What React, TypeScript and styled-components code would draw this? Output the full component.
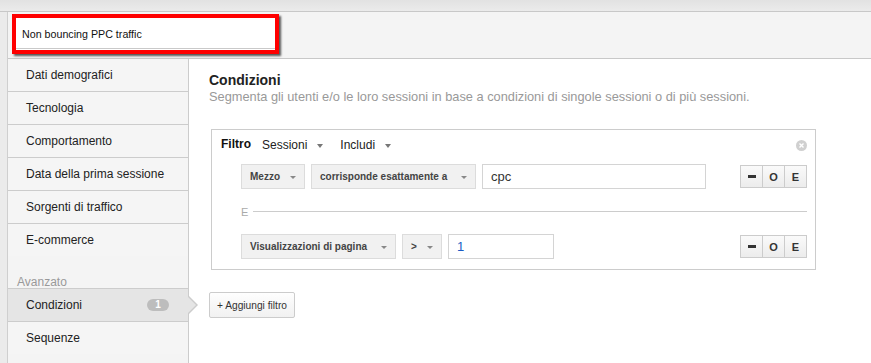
import styled, { createGlobalStyle } from 'styled-components';

const GlobalStyle = createGlobalStyle`
  html, body {
    margin: 0;
    padding: 0;
  }
  body {
    background: #ebebeb;
    font-family: "Liberation Sans", Arial, sans-serif;
    color: #222;
    width: 871px;
    height: 363px;
    overflow: hidden;
  }
`;

const navItems = [
  'Dati demografici',
  'Tecnologia',
  'Comportamento',
  'Data della prima sessione',
  'Sorgenti di traffico',
];

const App = () => {
  return (
    <>
      <GlobalStyle />
      <TopBand />
      <Shell>
        <Header>
          <NameFrame>
            <NameInput>Non bouncing PPC traffic</NameInput>
          </NameFrame>
        </Header>
        <Body>
          <Sidebar>
            {navItems.map((label) => (
              <NavItem key={label}>{label}</NavItem>
            ))}
            <NavItem $last>E-commerce</NavItem>
            <SectionLabel>Avanzato</SectionLabel>
            <NavItem $active $first>
              Condizioni
              <Badge>1</Badge>
            </NavItem>
            <NavItem $last>Sequenze</NavItem>
          </Sidebar>

          <Main>
            <Heading>Condizioni</Heading>
            <Subtitle>
              Segmenta gli utenti e/o le loro sessioni in base a condizioni di
              singole sessioni o di più sessioni.
            </Subtitle>

            <FilterBox>
              <FilterHeader>
                <FilterTitle>Filtro</FilterTitle>
                <HeaderMenu $gap={17}>
                  Sessioni <Caret />
                </HeaderMenu>
                <HeaderMenu>
                  Includi <Caret />
                </HeaderMenu>
                <CloseIcon>
                  <svg width='11' height='11' viewBox='0 0 11 11'>
                    <circle cx='5.5' cy='5.5' r='5.5' fill='#d0d0d0' />
                    <path
                      d='M3.5 3.5 L7.5 7.5 M7.5 3.5 L3.5 7.5'
                      stroke='#fff'
                      strokeWidth='1.4'
                    />
                  </svg>
                </CloseIcon>
              </FilterHeader>

              <Conditions>
                <ConditionRow>
                  <Select $width={64}>
                    Mezzo <SmallCaret />
                  </Select>
                  <Select $width={165}>
                    corrisponde esattamente a <SmallCaret />
                  </Select>
                  <ValueInput $width={224}>cpc</ValueInput>
                  <LogicGroup>
                    <LogicButton>
                      <MinusBar />
                    </LogicButton>
                    <LogicButton>O</LogicButton>
                    <LogicButton>E</LogicButton>
                  </LogicGroup>
                </ConditionRow>

                <Separator>
                  <SeparatorLabel>E</SeparatorLabel>
                  <SeparatorLine />
                </Separator>

                <ConditionRow>
                  <Select $width={155}>
                    Visualizzazioni di pagina <SmallCaret />
                  </Select>
                  <Select $width={40}>
                    &gt; <SmallCaret />
                  </Select>
                  <ValueInput $width={106} $blue>
                    1
                  </ValueInput>
                  <LogicGroup>
                    <LogicButton>
                      <MinusBar />
                    </LogicButton>
                    <LogicButton>O</LogicButton>
                    <LogicButton>E</LogicButton>
                  </LogicGroup>
                </ConditionRow>
              </Conditions>
            </FilterBox>

            <AddButton>+ Aggiungi filtro</AddButton>
          </Main>
        </Body>
      </Shell>
    </>
  );
};

const TopBand = styled.div`
  height: 11px;
  background: linear-gradient(#e2e2e2, #ebebeb);
  border-bottom: 1px solid #c8c8c8;
`;

const Shell = styled.div`
  margin-left: 7px;
  border-left: 1px solid #cfcfcf;
  background: #fff;
  height: 351px;
`;

const Header = styled.div`
  height: 47px;
  box-sizing: border-box;
  padding: 2px 0 0 4px;
  background: #f4f4f4;
  border-bottom: 1px solid #c8c8c8;
`;

const NameFrame = styled.div`
  width: 267px;
  height: 40px;
  box-sizing: border-box;
  border: 4px solid #f00;
  box-shadow: 2px 2px 2px rgba(0, 0, 0, 0.65);
  background: #fff;
`;

const NameInput = styled.div`
  height: 31px;
  box-sizing: border-box;
  border-bottom: 1px solid #c9c9c9;
  padding: 2px 0 0 6px;
  display: flex;
  align-items: center;
  font-size: 10.7px;
  color: #111;
`;

const Body = styled.div`
  display: flex;
  height: 304px;
`;

const Sidebar = styled.div`
  width: 180px;
  flex-shrink: 0;
  background: #f4f4f4;
  border-right: 1px solid #cccccc;
`;

const NavItem = styled.div<{ $active?: boolean; $last?: boolean; $first?: boolean }>`
  position: relative;
  height: 32px;
  display: flex;
  align-items: center;
  padding: 0 19px 0 18px;
  font-size: 12px;
  color: #222;
  background: ${(p) => (p.$active ? '#e5e5e5' : '#f5f5f5')};
  border-top: ${(p) => (p.$first ? '1px solid #cccccc' : 'none')};
  border-bottom: ${(p) => (p.$last ? 'none' : '1px solid #cccccc')};

  ${(p) =>
    p.$active &&
    `
    &::before,
    &::after {
      content: '';
      position: absolute;
      top: 50%;
      width: 0;
      height: 0;
      border-style: solid;
    }
    &::before {
      right: -10px;
      margin-top: -9px;
      border-width: 9px 0 9px 9px;
      border-color: transparent transparent transparent #cccccc;
    }
    &::after {
      right: -8px;
      margin-top: -8px;
      border-width: 8px 0 8px 8px;
      border-color: transparent transparent transparent #e5e5e5;
    }
  `}
`;

const SectionLabel = styled.div`
  height: 32px;
  box-sizing: border-box;
  padding: 19px 0 0 9px;
  font-size: 12px;
  color: #999;
  line-height: 14px;
`;

const Badge = styled.span`
  margin-left: auto;
  width: 22px;
  height: 12px;
  border-radius: 6px;
  background: #bdbdbd;
  color: #fff;
  font-size: 10px;
  font-weight: bold;
  line-height: 12px;
  text-align: center;
`;

const Main = styled.main`
  flex: 1;
  padding: 13px 20px 0 20px;
`;

const Heading = styled.h2`
  margin: 0;
  font-size: 14px;
  line-height: 17px;
  font-weight: bold;
  color: #222;
`;

const Subtitle = styled.p`
  margin: 0;
  font-size: 12.8px;
  line-height: 16px;
  color: #999;
`;

const FilterBox = styled.div`
  margin: 24px 0 0 2px;
  width: 605px;
  box-sizing: border-box;
  border: 1px solid #cccccc;
  padding: 7px 8px 10px 9px;
`;

const FilterHeader = styled.div`
  display: flex;
  align-items: center;
  height: 16px;
  font-size: 12px;
`;

const FilterTitle = styled.span`
  font-weight: bold;
  color: #111;
  margin-right: 11px;
  position: relative;
  top: -1px;
`;

const HeaderMenu = styled.span<{ $gap?: number }>`
  display: inline-flex;
  align-items: center;
  gap: 10px;
  color: #222;
  margin-right: ${(p) => p.$gap ?? 0}px;
`;

const Caret = styled.span`
  width: 0;
  height: 0;
  margin-top: 2px;
  border-left: 3.5px solid transparent;
  border-right: 3.5px solid transparent;
  border-top: 4px solid #777;
`;

const SmallCaret = styled.span`
  width: 0;
  height: 0;
  margin-top: 2px;
  border-left: 3px solid transparent;
  border-right: 3px solid transparent;
  border-top: 3px solid #888;
`;

const CloseIcon = styled.span`
  margin-left: auto;
  display: flex;
`;

const Conditions = styled.div`
  margin-top: 11px;
  padding-left: 20px;
`;

const ConditionRow = styled.div`
  display: flex;
  align-items: center;
  height: 25px;
`;

const Select = styled.div<{ $width: number }>`
  width: ${(p) => p.$width}px;
  height: 25px;
  box-sizing: border-box;
  margin-right: 6px;
  padding: 0 8px;
  display: flex;
  align-items: center;
  justify-content: space-between;
  background: #f1f1f1;
  border: 1px solid #dcdcdc;
  font-size: 10px;
  font-weight: bold;
  color: #444;
  white-space: nowrap;
`;

const ValueInput = styled.div<{ $width: number; $blue?: boolean }>`
  width: ${(p) => p.$width}px;
  height: 25px;
  box-sizing: border-box;
  padding: 0 8px;
  display: flex;
  align-items: center;
  border: 1px solid #d4d4d4;
  background: #fff;
  font-size: 13px;
  color: ${(p) => (p.$blue ? '#1a5bc4' : '#333')};
`;

const LogicGroup = styled.div`
  margin-left: auto;
  display: flex;
  border: 1px solid #cccccc;
`;

const LogicButton = styled.div`
  width: 21px;
  height: 21px;
  display: flex;
  align-items: center;
  justify-content: center;
  background: linear-gradient(#fafafa, #ececec);
  font-size: 11px;
  font-weight: bold;
  color: #333;

  & + & {
    border-left: 1px solid #cccccc;
  }
`;

const MinusBar = styled.span`
  width: 8px;
  height: 3px;
  background: #333;
`;

const Separator = styled.div`
  height: 45px;
  display: flex;
  align-items: center;
  gap: 5px;
`;

const SeparatorLabel = styled.span`
  font-size: 11px;
  color: #aaa;
`;

const SeparatorLine = styled.span`
  flex: 1;
  height: 1px;
  background: #cccccc;
`;

const AddButton = styled.button`
  margin-top: 22px;
  height: 26px;
  padding: 0 7px;
  border: 1px solid #cccccc;
  border-radius: 2px;
  background: linear-gradient(#fefefe, #f1f1f1);
  font-family: "Liberation Sans", Arial, sans-serif;
  font-size: 10.2px;
  color: #333;
  cursor: pointer;
`;

export default App;
